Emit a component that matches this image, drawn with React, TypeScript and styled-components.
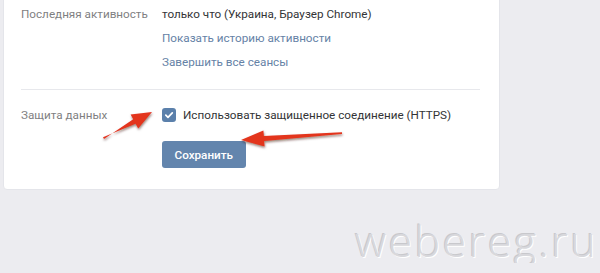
import React from "react";
import styled, { createGlobalStyle } from "styled-components";

const Global = createGlobalStyle`
  html, body { margin: 0; padding: 0; }
  body {
    background: #ececf0;
    font-family: Roboto, "Open Sans", "Liberation Sans", sans-serif;
    overflow: hidden;
  }
`;

const Page = styled.div`
  position: relative;
  width: 600px;
  height: 273px;
  padding-left: 3px;
  box-sizing: border-box;
`;

const Card = styled.div`
  width: 497px;
  margin-top: -10px;
  box-sizing: border-box;
  background: #fff;
  border: 1px solid #e4e5ea;
  border-radius: 4px;
  padding: 15px 19px 21px 17px;
`;

const Row = styled.div`
  display: grid;
  grid-template-columns: 141px 1fr;
  align-items: start;
`;

const Label = styled.div`
  font-size: 11.7px;
  line-height: 16px;
  color: #7f7f82;
  white-space: nowrap;
`;

const Values = styled.div<{ $gap: number }>`
  display: flex;
  flex-direction: column;
  align-items: flex-start;
  gap: ${(p) => p.$gap}px;
`;

const Text = styled.div`
  font-size: 11.7px;
  line-height: 16px;
  color: #333436;
  white-space: nowrap;
`;

const Link = styled.a`
  font-size: 11.7px;
  line-height: 16px;
  color: #6582a6;
  text-decoration: none;
  white-space: nowrap;
`;

const Divider = styled.div`
  height: 1px;
  background: #e7e8ec;
  margin: 19px 0 17px;
`;

const CheckRow = styled.label`
  display: flex;
  align-items: center;
  gap: 7px;
  font-size: 11.7px;
  line-height: 16px;
  color: #333436;
  white-space: nowrap;
`;

const Box = styled.span`
  width: 14px;
  height: 14px;
  border-radius: 3px;
  background: #5b80ab;
  display: flex;
  align-items: center;
  justify-content: center;
`;

const Button = styled.button`
  height: 27px;
  padding: 0 12.5px;
  border: none;
  border-radius: 3px;
  background: #6385ad;
  color: #fff;
  font-family: Roboto, "Liberation Sans", sans-serif;
  font-size: 11.7px;
  font-weight: 500;
  margin-top: 1px;
`;

const Watermark = styled.div`
  position: absolute;
  right: 2px;
  bottom: 1px;
  font-family: "Open Sans", "Liberation Sans", sans-serif;
  font-weight: 300;
  font-size: 43px;
  letter-spacing: 2.4px;
  line-height: 1;
  color: #d8d8dc;
  text-shadow: 1px 1px 0 #ffffff, -1px -1px 0 #c8c8cc;
`;

const Overlay = styled.svg`
  position: absolute;
  left: 0;
  top: 0;
  pointer-events: none;
`;

export default function App() {
  return (
    <>
      <Global />
      <Page>
        <Card>
          <Row>
            <Label>Последняя активность</Label>
            <Values $gap={8}>
              <Text>только что (Украина, Браузер Chrome)</Text>
              <Link href="#">Показать историю активности</Link>
              <Link href="#">Завершить все сеансы</Link>
            </Values>
          </Row>
          <Divider />
          <Row>
            <Label>Защита данных</Label>
            <Values $gap={17}>
              <CheckRow>
                <Box>
                  <svg width="10" height="10" viewBox="0 0 10 10">
                    <path d="M1.8 5.2 L4 7.3 L8.3 2.8" fill="none" stroke="#fff" strokeWidth="1.7" strokeLinecap="round" strokeLinejoin="round" />
                  </svg>
                </Box>
                Использовать защищенное соединение (HTTPS)
              </CheckRow>
              <Button>Сохранить</Button>
            </Values>
          </Row>
        </Card>
        <Overlay width="600" height="273" viewBox="0 0 600 273">
          <defs>
            <filter id="sh" x="-20%" y="-50%" width="140%" height="200%">
              <feDropShadow dx="0.5" dy="1.5" stdDeviation="1.2" floodColor="#3a0a05" floodOpacity="0.55" />
            </filter>
          </defs>
          <polygon
            points="104,149 133.2,129.3 130.6,124.4 152,122 138.2,138.6 135.6,133.7 103,147.2"
            fill="#e3341f"
            filter="url(#sh)"
          />
          <polygon
            points="342,142.2 263.9,146 263.4,140.5 241,150 264.6,156.5 264.1,151 342,144"
            fill="#e3341f"
            filter="url(#sh)"
          />
        </Overlay>
        <Watermark>webereg.ru</Watermark>
      </Page>
    </>
  );
}
